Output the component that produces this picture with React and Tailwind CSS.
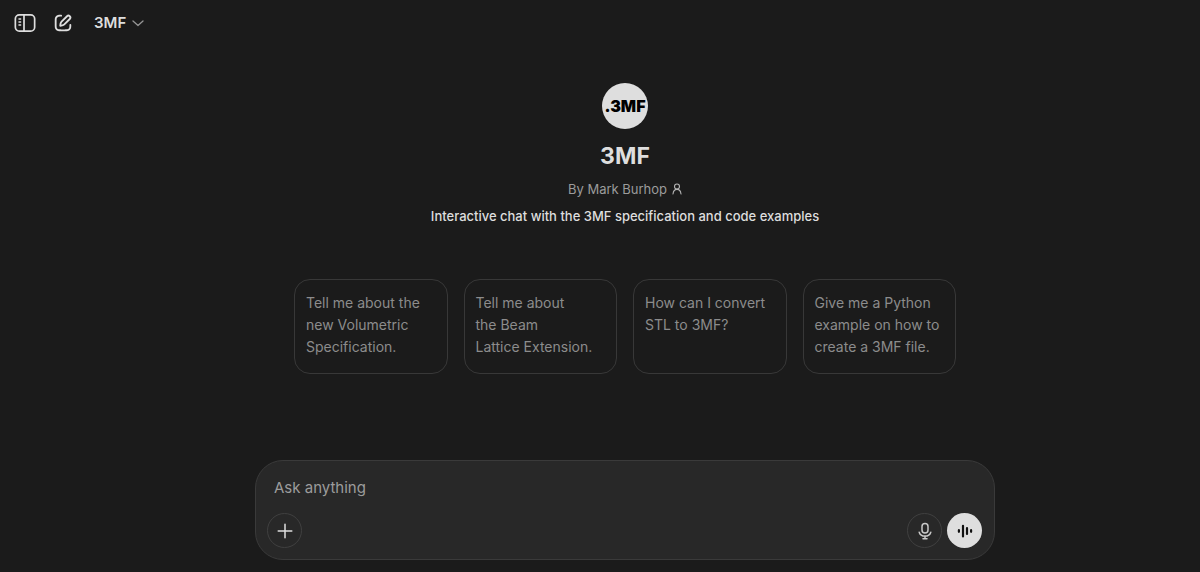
const prompts = [
  ["Tell me about the", "new Volumetric", "Specification."],
  ["Tell me about", "the Beam", "Lattice Extension."],
  ["How can I convert", "STL to 3MF?"],
  ["Give me a Python", "example on how to", "create a 3MF file."],
];

function SidebarIcon() {
  return (
    <svg width="22" height="22" viewBox="0 0 22 22" fill="none" stroke="currentColor" strokeWidth="1.7" aria-hidden="true">
      <rect x="1.35" y="2.85" width="19.3" height="16.3" rx="4" />
      <path d="M10 2.9v16.2" />
      <path d="M5 7h1.600M5 10h1.600M5 13h1.600" strokeLinecap="round" strokeWidth="1.5" />
    </svg>
  );
}

function ComposeIcon() {
  return (
    <svg width="22" height="22" viewBox="0 0 24 24" fill="currentColor" aria-hidden="true">
      <path d="M15.673 3.913a3.121 3.121 0 1 1 4.414 4.414l-5.937 5.937a5 5 0 0 1-2.828 1.415l-2.18.31a1 1 0 0 1-1.132-1.13l.311-2.18A5 5 0 0 1 9.736 9.85zm3 1.414a1.121 1.121 0 0 0-1.586 0l-5.937 5.937a3 3 0 0 0-.849 1.697l-.123.86.86-.122a3 3 0 0 0 1.698-.849l5.937-5.937a1.121 1.121 0 0 0 0-1.586M11 4a1 1 0 0 1-1 1c-.998 0-1.702.008-2.253.06-.54.052-.862.141-1.109.267a3 3 0 0 0-1.311 1.311c-.134.263-.226.611-.276 1.216C5.001 8.471 5 9.264 5 10.4v3.2c0 1.137 0 1.929.051 2.546.05.605.142.953.276 1.216a3 3 0 0 0 1.311 1.311c.263.134.611.226 1.216.276.617.05 1.41.051 2.546.051h3.2c1.137 0 1.929 0 2.546-.051.605-.05.953-.142 1.216-.276a3 3 0 0 0 1.311-1.311c.126-.247.215-.569.266-1.108.053-.552.06-1.256.06-2.255a1 1 0 1 1 2 .002c0 .978-.006 1.78-.069 2.442-.064.673-.192 1.27-.475 1.827a5 5 0 0 1-2.185 2.185c-.592.302-1.232.428-1.961.487C15.6 21 14.727 21 13.643 21h-3.286c-1.084 0-1.958 0-2.666-.058-.728-.06-1.369-.185-1.96-.487a5 5 0 0 1-2.186-2.185c-.302-.592-.428-1.233-.487-1.961C3 15.6 3 14.727 3 13.643v-3.286c0-1.084 0-1.958.058-2.666.06-.729.185-1.369.487-1.961A5 5 0 0 1 5.73 3.545c.556-.284 1.154-.411 1.827-.475C8.22 3.007 9.021 3 10 3a1 1 0 0 1 1 1" />
    </svg>
  );
}

export default function App() {
  return (
    <div className="flex min-h-screen flex-col bg-[#1b1b1b] font-['Inter','Liberation_Sans',sans-serif] text-[#dedede]">
      <header className="flex items-center gap-4 px-3.5 pt-3">
        <button type="button" aria-label="Open sidebar" className="h-[22px] w-[22px]">
          <SidebarIcon />
        </button>
        <button type="button" aria-label="New chat" className="h-[22px] w-[22px]">
          <ComposeIcon />
        </button>
        <button type="button" className="ml-1 flex h-[22px] items-center gap-1.5 text-[15px] font-semibold">
          3MF
          <svg width="12" height="12" viewBox="0 0 12 12" fill="none" stroke="#959595" strokeWidth="1.3" strokeLinecap="round" strokeLinejoin="round" aria-hidden="true">
            <path d="M1 4l5 4.600L11 4" />
          </svg>
        </button>
      </header>

      <main className="flex flex-1 flex-col items-center pr-4 pb-3 pl-[66px]">
        <div className="mt-[49px] flex h-[46px] w-[46px] items-center justify-center rounded-full bg-[#dedede] text-base font-black text-black">
          .3MF
        </div>
        <h1 className="mt-[11px] text-[23px] leading-8 font-bold">3MF</h1>
        <p className="mt-[5px] flex items-center gap-[5px] text-[13px] leading-6 text-[#9c9c9c]">
          By Mark Burhop
          <svg width="10" height="12" viewBox="0 0 10 12" fill="none" stroke="#b4b4b4" strokeWidth="1.1" strokeLinecap="round" aria-hidden="true">
            <circle cx="5" cy="3.5" r="2.5" />
            <path d="M1 11c.3-2.600 1.700-4.600 4-4.600s3.700 2 4 4.600" />
          </svg>
        </p>
        <p className="mt-[3px] text-[13px] leading-6 font-medium">Interactive chat with the 3MF specification and code examples</p>

        <ul className="mt-[51px] grid w-full max-w-[662px] grid-cols-4 gap-4">
          {prompts.map((lines) => (
            <li key={lines[0]} className="flex">
              <button type="button" className="flex w-full flex-col rounded-2xl border border-[#383838] px-[11px] pt-3 pb-[15px] text-left text-sm leading-[22px] text-[#8c8c8c]">
                {lines.map((line) => (
                  <span key={line} className="whitespace-nowrap">{line}</span>
                ))}
              </button>
            </li>
          ))}
        </ul>

        <form className="mt-auto w-full max-w-[740px] rounded-[28px] border border-[#3a3a3a] bg-[#282828] pt-3.5 pr-3 pb-[11px] pl-[11px]" onSubmit={(e) => e.preventDefault()}>
          <input type="text" aria-label="Ask anything" placeholder="Ask anything" className="block h-6 w-full bg-transparent px-[7px] text-[15px] outline-none placeholder:text-[#9c9c9c]" />
          <div className="mt-3.5 flex items-center gap-[5px]">
            <button type="button" aria-label="Add files" className="mr-auto flex h-[35px] w-[35px] items-center justify-center rounded-full border border-[#404040]">
              <svg width="16" height="16" viewBox="0 0 16 16" stroke="currentColor" strokeWidth="1.5" strokeLinecap="round" aria-hidden="true">
                <path d="M8 1.200v13.600M1.200 8h13.600" />
              </svg>
            </button>
            <button type="button" aria-label="Dictate" className="flex h-[35px] w-[35px] items-center justify-center rounded-full border border-[#404040] text-[#c8c8c8]">
              <svg width="14" height="18" viewBox="0 0 14 18" fill="none" stroke="currentColor" strokeWidth="1.5" strokeLinecap="round" aria-hidden="true">
                <rect x="4" y="1.500" width="6" height="9.500" rx="3" />
                <path d="M1.200 10.200c.7 2.400 3 3.900 5.800 3.900s5.100-1.500 5.800-3.900M7 14.200v2.400M5 16.700h4" />
              </svg>
            </button>
            <button type="button" aria-label="Voice mode" className="flex h-[35px] w-[35px] items-center justify-center rounded-full bg-[#dedede] text-[#111111]">
              <svg width="16" height="16" viewBox="0 0 16 16" stroke="currentColor" strokeWidth="2.2" strokeLinecap="round" aria-hidden="true">
                <path d="M1.900 7.200v1.600M6 2.800v10.600M10 5.200v5.800M14.100 7.200v1.600" />
              </svg>
            </button>
          </div>
        </form>
      </main>
    </div>
  );
}
